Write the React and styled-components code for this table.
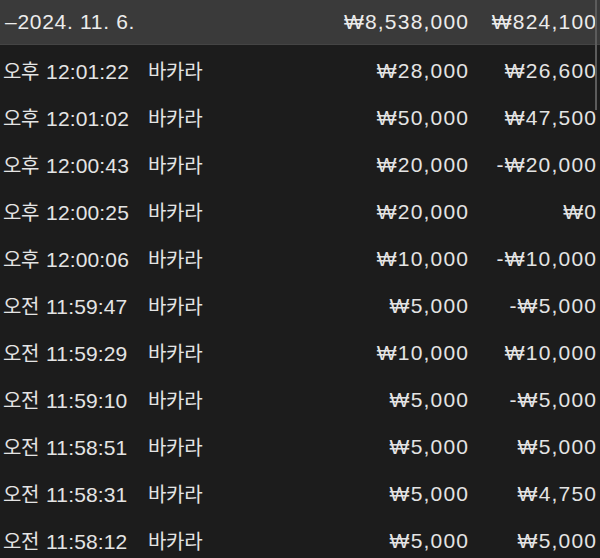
import React from "react";
import styled, { createGlobalStyle } from "styled-components";

const Global = createGlobalStyle`
  html, body { margin: 0; padding: 0; background: #1c1c1c; }
  body { width: 600px; height: 558px; overflow: hidden; }
  #root { width: 600px; height: 558px; }
`;

const Screen = styled.div`
  position: relative;
  width: 600px;
  height: 558px;
  background: #1c1c1c;
  color: #e4e4e4;
  font-family: "Liberation Sans", "Noto Sans CJK KR", sans-serif;
  font-size: 21px;
  overflow: hidden;
`;

const Header = styled.div`
  display: grid;
  grid-template-columns: 1fr 170px 128px;
  align-items: center;
  height: 43px;
  padding: 0 4px 1px 5px;
  background: #3a3a3a;
  border-bottom: 1px solid #444444;
  color: #ececec;
`;

const Cell = styled.span`
  white-space: nowrap;
  text-align: left;
  letter-spacing: ${(p) => p.$spacing || "normal"};
`;

const Amount = styled.span`
  white-space: nowrap;
  text-align: right;
  letter-spacing: 1.2px;
  margin-right: -1.2px;
`;

const Kor = styled.span`
  font-family: "Noto Sans CJK KR", sans-serif;
  font-size: 20px;
  letter-spacing: -0.3px;
`;

const Meridiem = styled(Kor)`
  margin-right: 1px;
`;

const List = styled.div`
  display: flex;
  flex-direction: column;
  padding-top: 2px;
`;

const Row = styled.div`
  display: grid;
  grid-template-columns: 145px 1fr 170px 128px;
  align-items: center;
  height: 47px;
  padding: 0 4px 0 3px;
`;

const Time = styled.span`
  letter-spacing: 0.15px;
`;

const Thumb = styled.div`
  position: absolute;
  top: 0;
  right: 3px;
  width: 2px;
  height: 110px;
  background: #5c5c5c;
`;

const rows = [
  ["오후", "12:01:22", "₩28,000", "₩26,600"],
  ["오후", "12:01:02", "₩50,000", "₩47,500"],
  ["오후", "12:00:43", "₩20,000", "-₩20,000"],
  ["오후", "12:00:25", "₩20,000", "₩0"],
  ["오후", "12:00:06", "₩10,000", "-₩10,000"],
  ["오전", "11:59:47", "₩5,000", "-₩5,000"],
  ["오전", "11:59:29", "₩10,000", "₩10,000"],
  ["오전", "11:59:10", "₩5,000", "-₩5,000"],
  ["오전", "11:58:51", "₩5,000", "₩5,000"],
  ["오전", "11:58:31", "₩5,000", "₩4,750"],
  ["오전", "11:58:12", "₩5,000", "₩5,000"],
];

export default function App() {
  return (
    <Screen>
      <Global />
      <Header>
        <Cell $spacing="0.7px">–2024. 11. 6.</Cell>
        <Amount>₩8,538,000</Amount>
        <Amount>₩824,100</Amount>
      </Header>
      <List>
        {rows.map(([ap, t, bet, res]) => (
          <Row key={t}>
            <Cell>
              <Meridiem>{ap}</Meridiem> <Time>{t}</Time>
            </Cell>
            <Cell>
              <Kor>바카라</Kor>
            </Cell>
            <Amount>{bet}</Amount>
            <Amount>{res}</Amount>
          </Row>
        ))}
      </List>
      <Thumb />
    </Screen>
  );
}
